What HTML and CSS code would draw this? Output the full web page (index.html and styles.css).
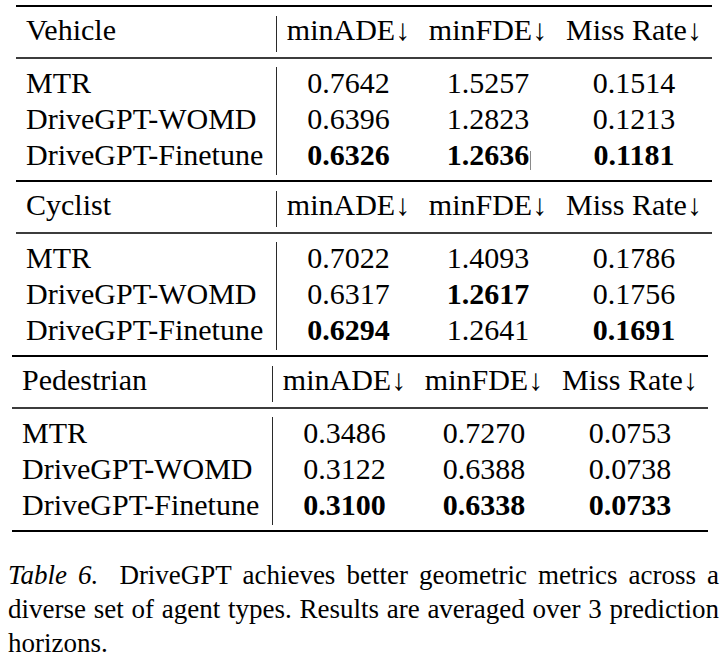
FILE: index.html
```html
<!DOCTYPE html>
<html lang="en">
<head>
<meta charset="utf-8">
<title>Table 6</title>
<link rel="stylesheet" href="styles.css">
</head>
<body>
<div class="page">
  <section class="block shift-r">
    <div class="row head">
      <div class="cell lbl">Vehicle</div>
      <div class="cell num">minADE↓</div>
      <div class="cell num">minFDE↓</div>
      <div class="cell num">Miss Rate↓</div>
    </div>
    <div class="mid"></div>
    <div class="rows">
      <div class="cell lbl">MTR</div>
      <div class="cell num">0.7642</div>
      <div class="cell num">1.5257</div>
      <div class="cell num">0.1514</div>
      <div class="cell lbl">DriveGPT-WOMD</div>
      <div class="cell num">0.6396</div>
      <div class="cell num">1.2823</div>
      <div class="cell num">0.1213</div>
      <div class="cell lbl">DriveGPT-Finetune</div>
      <div class="cell num"><b>0.6326</b></div>
      <div class="cell num"><b class="mark">1.2636<span class="caret"></span></b></div>
      <div class="cell num"><b>0.1181</b></div>
    </div>
  </section>

  <section class="block shift-r">
    <div class="row head">
      <div class="cell lbl">Cyclist</div>
      <div class="cell num">minADE↓</div>
      <div class="cell num">minFDE↓</div>
      <div class="cell num">Miss Rate↓</div>
    </div>
    <div class="mid"></div>
    <div class="rows">
      <div class="cell lbl">MTR</div>
      <div class="cell num">0.7022</div>
      <div class="cell num">1.4093</div>
      <div class="cell num">0.1786</div>
      <div class="cell lbl">DriveGPT-WOMD</div>
      <div class="cell num">0.6317</div>
      <div class="cell num"><b>1.2617</b></div>
      <div class="cell num">0.1756</div>
      <div class="cell lbl">DriveGPT-Finetune</div>
      <div class="cell num"><b>0.6294</b></div>
      <div class="cell num">1.2641</div>
      <div class="cell num"><b>0.1691</b></div>
    </div>
  </section>

  <section class="block shift-l last">
    <div class="row head">
      <div class="cell lbl">Pedestrian</div>
      <div class="cell num">minADE↓</div>
      <div class="cell num">minFDE↓</div>
      <div class="cell num">Miss Rate↓</div>
    </div>
    <div class="mid"></div>
    <div class="rows">
      <div class="cell lbl">MTR</div>
      <div class="cell num">0.3486</div>
      <div class="cell num">0.7270</div>
      <div class="cell num">0.0753</div>
      <div class="cell lbl">DriveGPT-WOMD</div>
      <div class="cell num">0.3122</div>
      <div class="cell num">0.6388</div>
      <div class="cell num">0.0738</div>
      <div class="cell lbl">DriveGPT-Finetune</div>
      <div class="cell num"><b>0.3100</b></div>
      <div class="cell num"><b>0.6338</b></div>
      <div class="cell num"><b>0.0733</b></div>
    </div>
  </section>

  <p class="caption"><em class="label">Table 6.</em> DriveGPT achieves better geometric metrics across a diverse set of agent types. Results are averaged over 3 prediction horizons.</p>
</div>
</body>
</html>
```

FILE: styles.css
```css
html, body {
  margin: 0;
  padding: 0;
  background: #ffffff;
}

body {
  font-family: "Liberation Serif", "Times New Roman", serif;
  color: #000000;
}

.page {
  width: 727px;
  height: 661px;
  padding-top: 5px;
  box-sizing: border-box;
  overflow: hidden;
}

.block {
  width: 696px;
  border-top: 2px solid #000;
  padding: 9px 0 5px;
  font-size: 30px;
}

.block.shift-r {
  margin-left: 16px;
}

.block.shift-l {
  margin-left: 12px;
}

.block.last {
  border-bottom: 2px solid #000;
}

.row,
.rows {
  display: grid;
  grid-template-columns: 261px 143px 136px 156px;
}

.cell {
  white-space: nowrap;
}

.head .cell {
  height: 36px;
  line-height: 28px;
  box-sizing: border-box;
  padding-bottom: 8px;
}

.rows .cell {
  height: 36px;
  line-height: 32px;
  box-sizing: border-box;
  padding-bottom: 4px;
}

.lbl {
  padding-left: 10px;
  border-right: 1px solid #2a2a2a;
  box-sizing: border-box;
}

.num {
  text-align: center;
}

.mid {
  height: 2px;
  background: #3c3c3c;
  margin: 5px 0 8px;
}

b {
  font-weight: bold;
}

.mark {
  position: relative;
}

.caret {
  position: absolute;
  right: -2px;
  bottom: 1px;
  width: 1px;
  height: 19px;
  background: #8a8a8a;
}

.caption {
  margin: 26px 0 0 8px;
  width: 711px;
  font-size: 27px;
  line-height: 34px;
  text-align: justify;
}

.caption .label {
  font-style: italic;
  margin-right: 10px;
}
```
